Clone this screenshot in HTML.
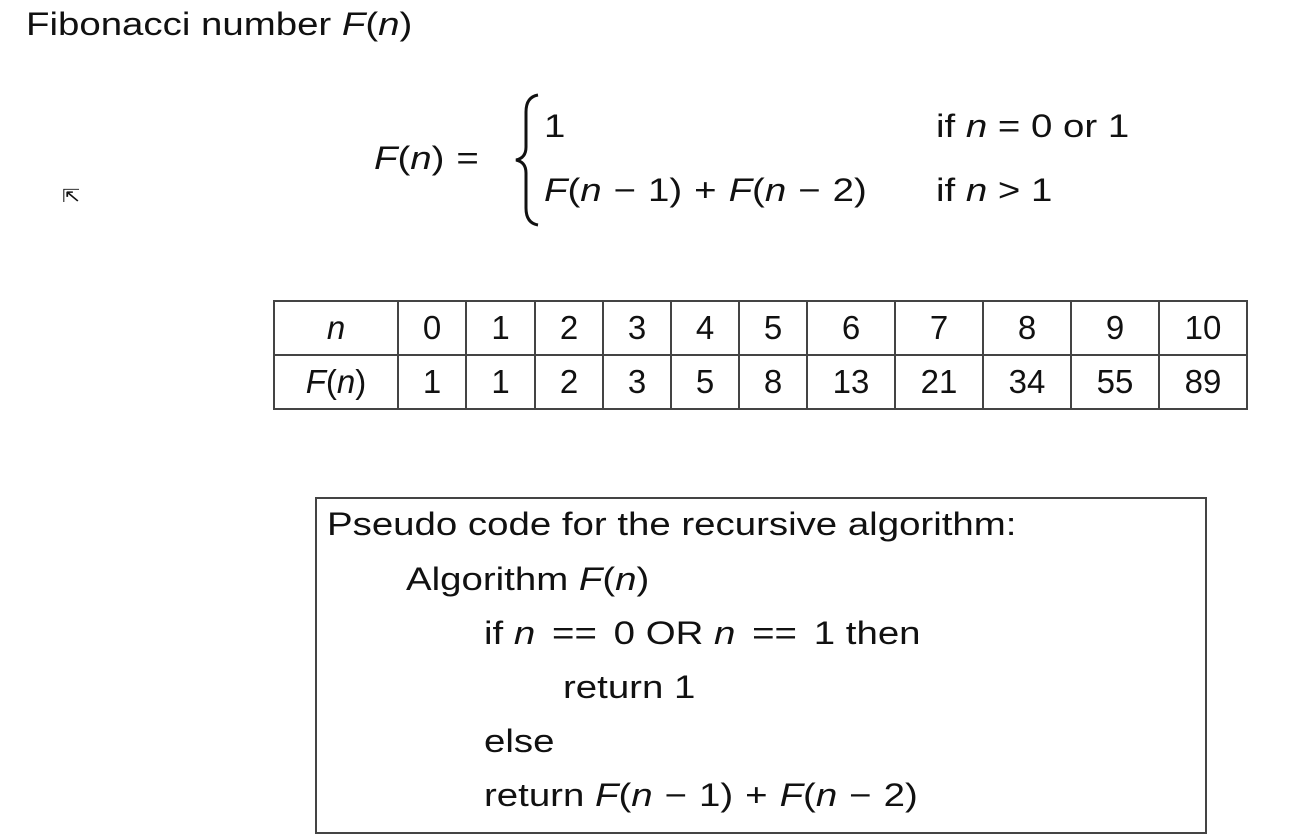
<!DOCTYPE html>
<html><head><style>
body{margin:0;width:1300px;height:835px;background:#fff;position:relative;overflow:hidden;font-family:"Liberation Sans",sans-serif;color:#111;}
.t{position:absolute;white-space:nowrap;font-size:32px;line-height:40px;transform:scaleX(1.2);transform-origin:0 0;}
i{font-style:italic;}
.op{margin:0 10px;}
.eq{margin:0 14px;}
table{position:absolute;left:273px;top:300px;border-collapse:collapse;font-size:33px;}
td{border:2px solid #444;height:52px;text-align:center;padding:0;}
.box{position:absolute;left:315px;top:497px;width:888px;height:333px;border:2px solid #444;}
</style></head><body>
<div class="t" style="left:26px;top:4px">Fibonacci number <i>F</i>(<i>n</i>)</div>
<div class="t" style="left:62px;top:176px;font-size:18px">&#8689;</div>
<div class="t" style="left:374px;top:138px"><i>F</i>(<i>n</i>)<span class="op">=</span></div>
<svg style="position:absolute;left:508px;top:92px" width="36" height="136"><path d="M30 3 Q18 5 18 20 L18 55 Q18 66 8 68 Q18 70 18 81 L18 116 Q18 131 30 133" fill="none" stroke="#111" stroke-width="3"/></svg>
<div class="t" style="left:544px;top:106px">1</div>
<div class="t" style="left:936px;top:106px">if <i>n</i> = 0 or 1</div>
<div class="t" style="left:544px;top:170px"><i>F</i>(<i>n</i><span class="op">−</span>1)<span class="op">+</span><i>F</i>(<i>n</i><span class="op">−</span>2)</div>
<div class="t" style="left:936px;top:170px">if <i>n</i> &gt; 1</div>
<table>
<tr><td style="width:122px"><i>n</i></td><td style="width:66px">0</td><td style="width:67px">1</td><td style="width:66px">2</td><td style="width:66px">3</td><td style="width:66px">4</td><td style="width:66px">5</td><td style="width:86px">6</td><td style="width:86px">7</td><td style="width:86px">8</td><td style="width:86px">9</td><td style="width:86px">10</td></tr>
<tr><td><i>F</i>(<i>n</i>)</td><td>1</td><td>1</td><td>2</td><td>3</td><td>5</td><td>8</td><td>13</td><td>21</td><td>34</td><td>55</td><td>89</td></tr>
</table>
<div class="box"></div>
<div class="t" style="left:327px;top:504px">Pseudo code for the recursive algorithm:</div>
<div class="t" style="left:406px;top:559px">Algorithm <i>F</i>(<i>n</i>)</div>
<div class="t" style="left:484px;top:613px">if <i>n</i><span class="eq">==</span>0 OR <i>n</i><span class="eq">==</span>1 then</div>
<div class="t" style="left:563px;top:667px">return 1</div>
<div class="t" style="left:484px;top:721px">else</div>
<div class="t" style="left:484px;top:775px">return <i>F</i>(<i>n</i><span class="op">−</span>1)<span class="op">+</span><i>F</i>(<i>n</i><span class="op">−</span>2)</div>
</body></html>
